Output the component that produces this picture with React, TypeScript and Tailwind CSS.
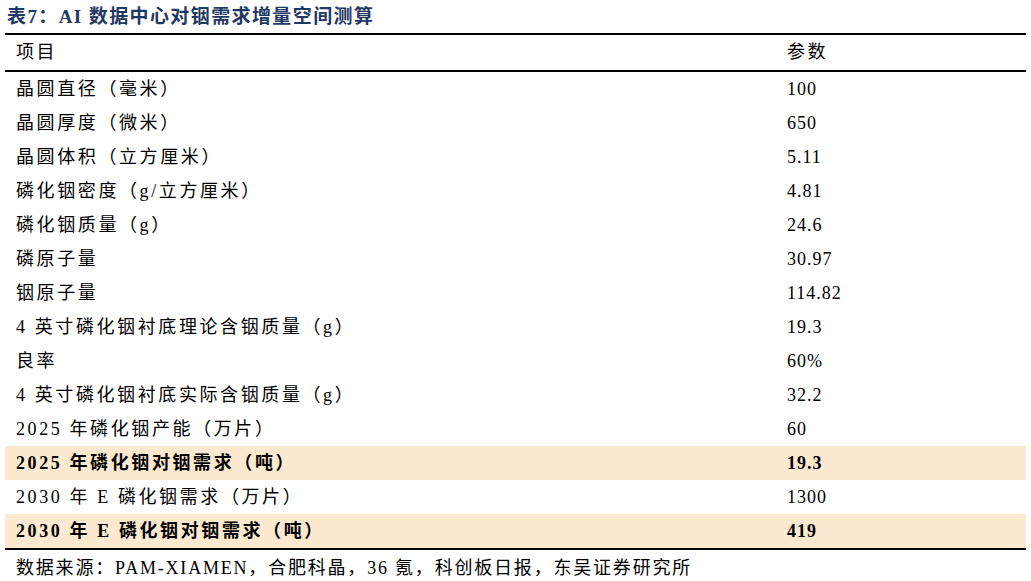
const rows: { label: string; value: string; strong?: boolean }[] = [
  { label: "晶圆直径（毫米）", value: "100" },
  { label: "晶圆厚度（微米）", value: "650" },
  { label: "晶圆体积（立方厘米）", value: "5.11" },
  { label: "磷化铟密度（g/立方厘米）", value: "4.81" },
  { label: "磷化铟质量（g）", value: "24.6" },
  { label: "磷原子量", value: "30.97" },
  { label: "铟原子量", value: "114.82" },
  { label: "4 英寸磷化铟衬底理论含铟质量（g）", value: "19.3" },
  { label: "良率", value: "60%" },
  { label: "4 英寸磷化铟衬底实际含铟质量（g）", value: "32.2" },
  { label: "2025 年磷化铟产能（万片）", value: "60" },
  { label: "2025 年磷化铟对铟需求（吨）", value: "19.3", strong: true },
  { label: "2030 年 E 磷化铟需求（万片）", value: "1300" },
  { label: "2030 年 E 磷化铟对铟需求（吨）", value: "419", strong: true },
];

const serif = "font-['Liberation_Serif','Noto_Sans_CJK_SC',serif]";

export default function App() {
  return (
    <div className={`w-[1031px] h-[581px] bg-white px-[5px] text-black ${serif}`}>
      <div className="h-[35px] border-b-2 border-black flex items-center pl-[2px]">
        <h1 className="text-[19px] font-bold text-[#1f3864] leading-none tracking-[1.4px]">
          表7：AI 数据中心对铟需求增量空间测算
        </h1>
      </div>

      <div className="grid grid-cols-[771px_1fr] h-[37px] border-b-2 border-black items-center text-[18px] tracking-[2.6px]">
        <div className="pl-[11px]">项目</div>
        <div className="pl-[11px]">参数</div>
      </div>

      <div className="border-b-2 border-black">
        {rows.map((r) => (
          <div
            key={r.label}
            className={`grid grid-cols-[771px_1fr] h-[34px] items-center text-[18px] ${
              r.strong ? "bg-[#fde9cf] font-bold" : ""
            }`}
          >
            <div className="pl-[11px] whitespace-nowrap tracking-[2.6px]">{r.label}</div>
            <div className="pl-[11px] tracking-[1px]">{r.value}</div>
          </div>
        ))}
      </div>

      <p className="pl-[11px] pt-[5px] text-[18px] tracking-[1.8px] whitespace-nowrap">
        数据来源：PAM-XIAMEN，合肥科晶，36 氪，科创板日报，东吴证券研究所
      </p>
    </div>
  );
}
